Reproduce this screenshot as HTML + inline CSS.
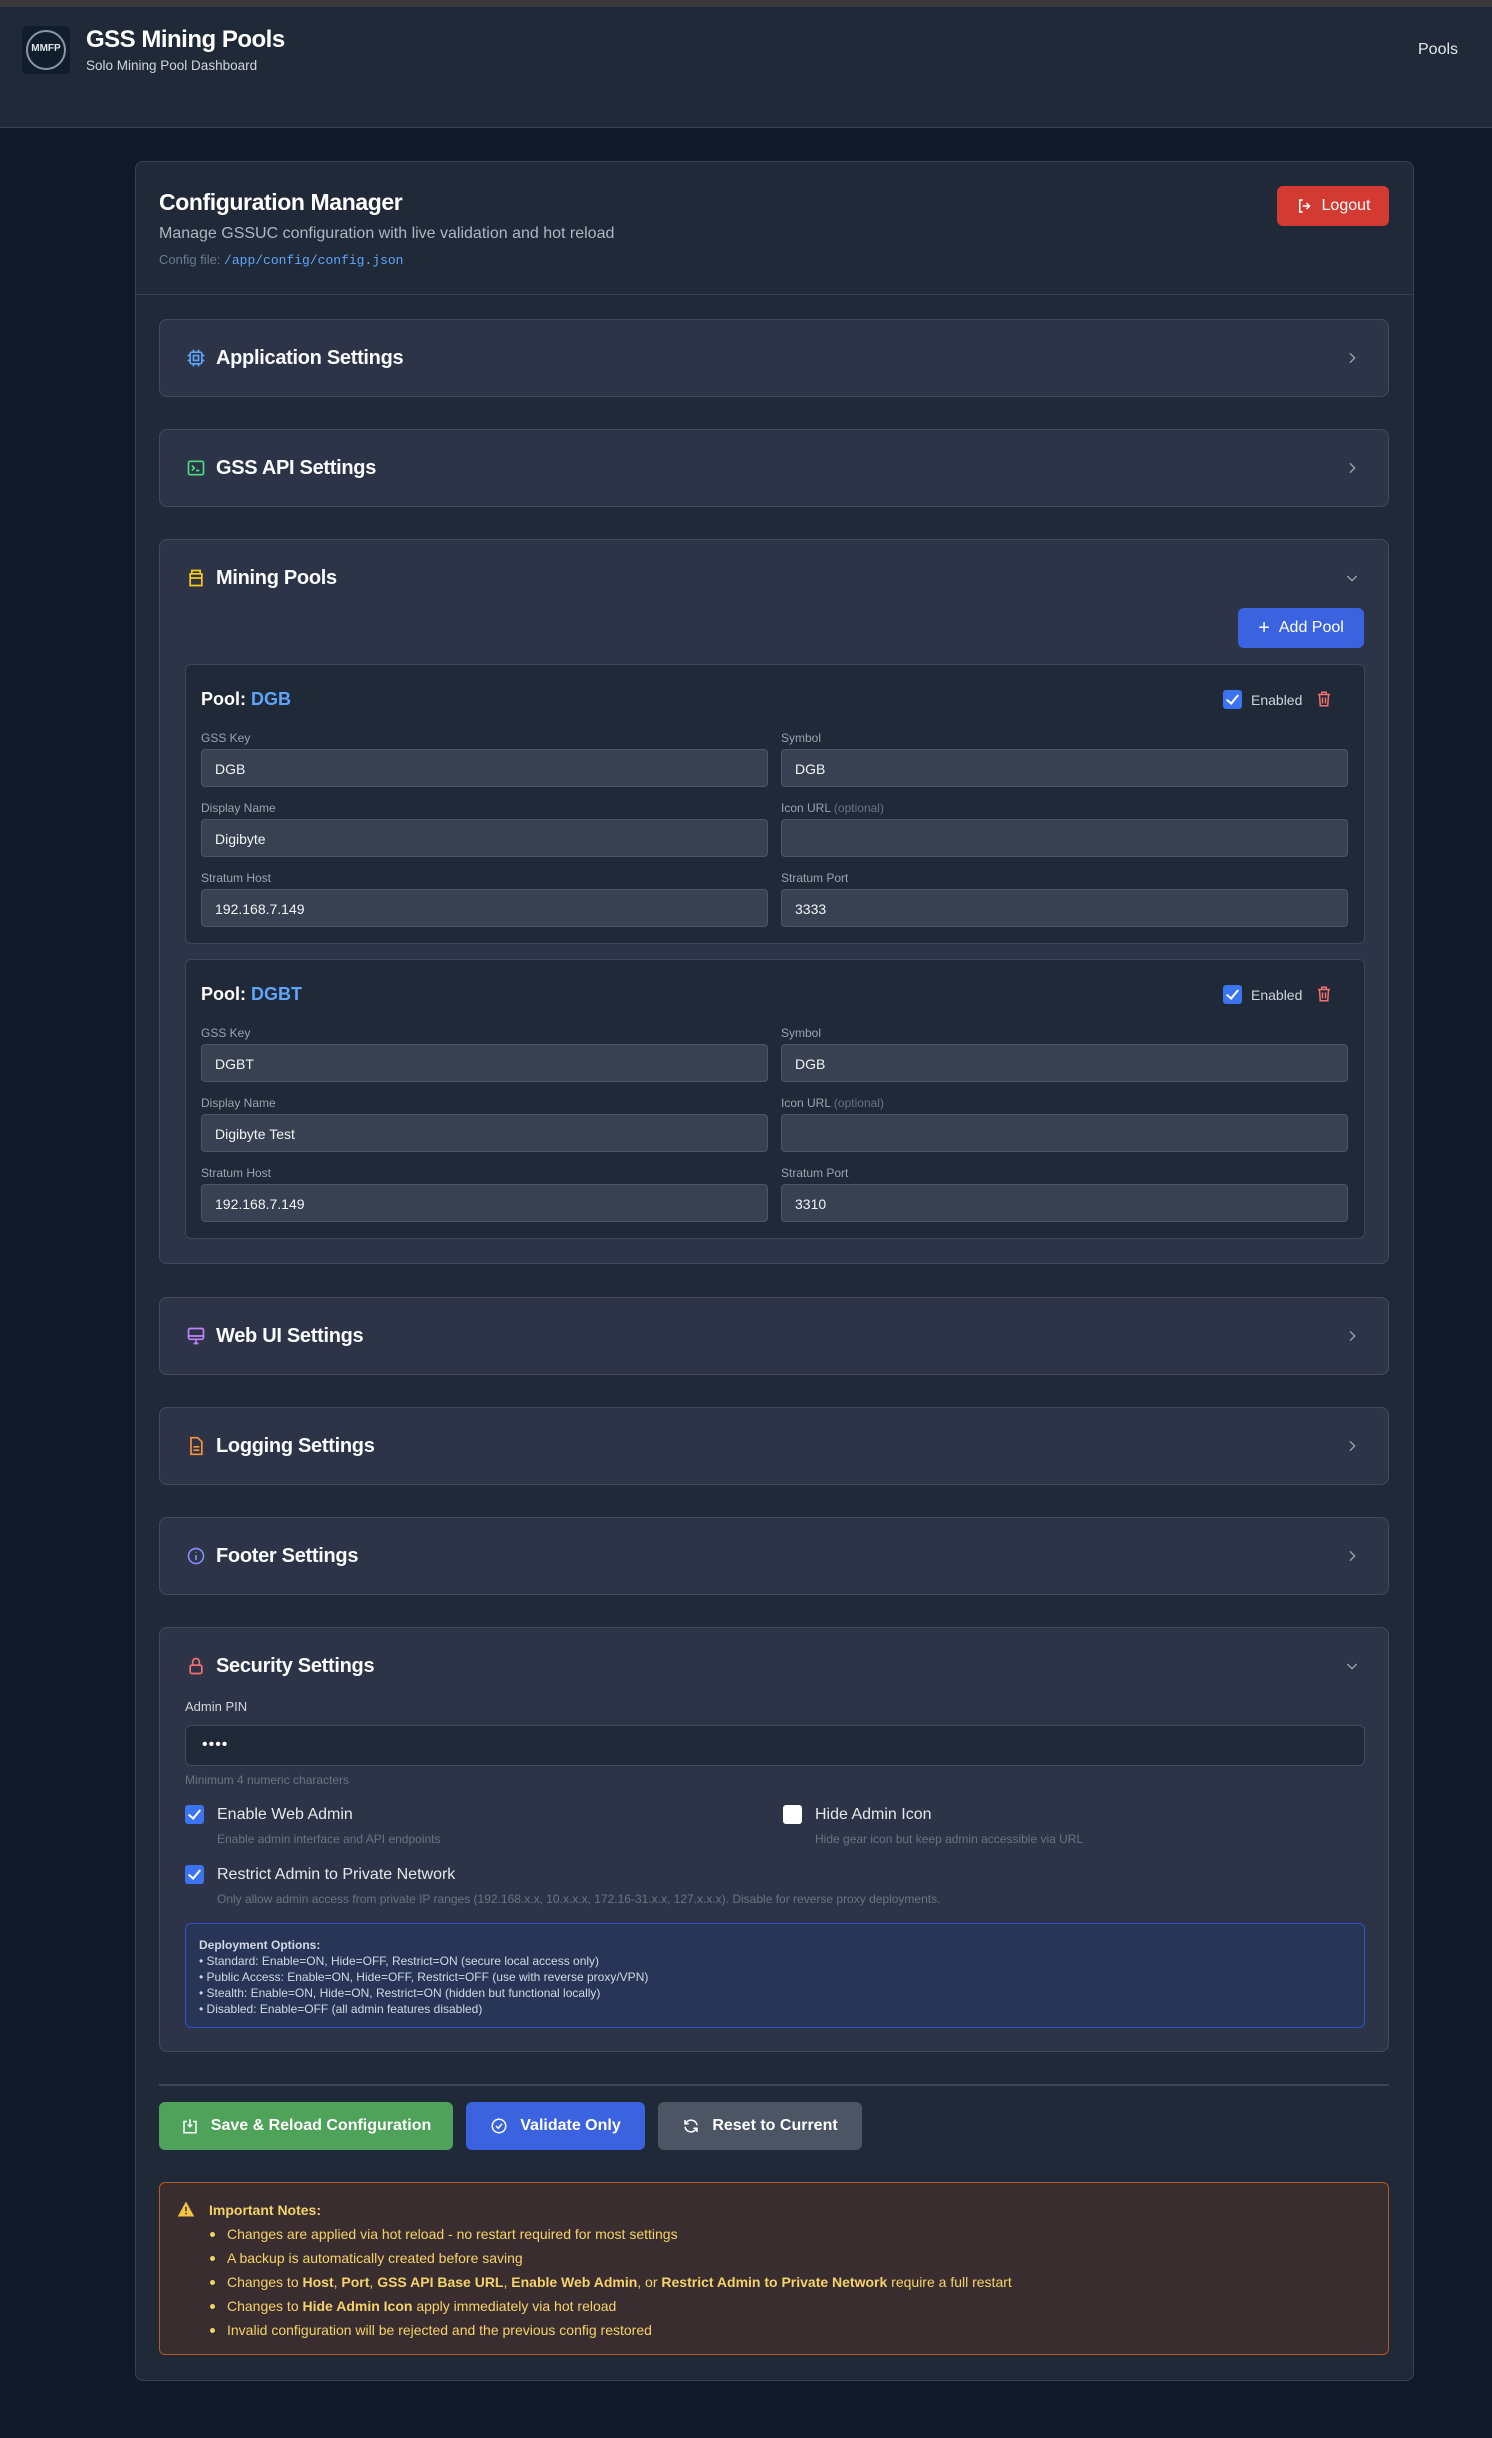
<!DOCTYPE html>
<html><head><meta charset="utf-8"><style>
*{box-sizing:border-box;margin:0;padding:0}
body{width:1492px;height:2438px;background:#111827;font-family:"Liberation Sans",sans-serif;color:#fff;position:relative;overflow:hidden}
.a{position:absolute}
.sec{position:absolute;left:159px;width:1230px;background:#2d3447;border:1px solid #414b5d;border-radius:8px}
.sec .t{position:absolute;left:56px;top:27px;font-size:20px;font-weight:bold;color:#f9fafb;letter-spacing:-0.3px}
.sec svg.ic{position:absolute;left:26px;top:28px}
.sec .ch{position:absolute;right:28px;top:30px}
.pool{position:absolute;left:25px;width:1180px;height:280px;background:#1f2937;border:1px solid #3c4657;border-radius:6px}
.lab{position:absolute;font-size:12px;color:#9ca3af}
.inp{position:absolute;height:38px;width:567px;background:#374151;border:1px solid #4b5563;border-radius:4px;font-size:14px;color:#f3f4f6;padding:11px 13px}
.cb{position:absolute;width:19px;height:19px;background:#3b73f0;border-radius:3px}
.cb:after{content:"";position:absolute;left:6px;top:2px;width:5px;height:10px;border:solid #fff;border-width:0 2.5px 2.5px 0;transform:rotate(40deg)}
.btn{position:absolute;top:2102px;height:48px;border-radius:6px;font-size:16px;font-weight:bold;color:#fff;display:flex;align-items:center;justify-content:center;gap:12px}
.note li{list-style:none;position:absolute;left:67px;font-size:14px;color:#f4d36a}
.note li:before{content:"";position:absolute;left:-17px;top:6px;width:5px;height:5px;border-radius:50%;background:#f4d36a}
</style></head><body>
<div class="a" style="left:0;top:0;width:1492px;height:7px;background:#3a3a3a"></div>
<div class="a" style="left:0;top:7px;width:1492px;height:121px;background:#1f2937;border-bottom:1px solid #374151"></div>
<div class="a" style="left:22px;top:26px;width:48px;height:48px;background:#0f1e2a;border-radius:5px;overflow:hidden"><div style="position:absolute;left:4px;top:4px;width:40px;height:40px;border:2px solid #8a96a3;border-radius:50%"></div><div style="position:absolute;left:0;top:17px;width:48px;text-align:center;font-size:10px;font-weight:bold;color:#dfe6ee">MMFP</div></div>
<div class="a" style="left:86px;top:26px;font-size:24px;font-weight:bold;letter-spacing:-0.5px">GSS Mining Pools</div>
<div class="a" style="left:86px;top:58px;font-size:13.5px;color:#d1d5db">Solo Mining Pool Dashboard</div>
<div class="a" style="left:1418px;top:41px;font-size:16px;color:#e5e7eb">Pools</div>

<div class="a" style="left:135px;top:161px;width:1279px;height:2220px;background:#1f2937;border:1px solid #374151;border-radius:8px"></div>
<div class="a" style="left:159px;top:189px;font-size:23px;font-weight:bold;letter-spacing:-0.4px">Configuration Manager</div>
<div class="a" style="left:159px;top:225px;font-size:16px;color:#aeb6c2">Manage GSSUC configuration with live validation and hot reload</div>
<div class="a" style="left:159px;top:252px;font-size:13px;color:#6b7a90">Config file: <span style="font-family:'Liberation Mono',monospace;color:#60a5fa">/app/config/config.json</span></div>
<div class="a" style="left:1277px;top:186px;width:112px;height:40px;background:#d33a32;border-radius:6px;font-size:16px;display:flex;align-items:center;justify-content:center;gap:8px"><svg width="18" height="18" viewBox="0 0 24 24" fill="none" stroke="#fff" stroke-width="2"><path d="M9 4H5v16h4M14 8l4 4-4 4M18 12H9"/></svg>Logout</div>
<div class="a" style="left:136px;top:294px;width:1277px;height:1px;background:#374151"></div>

<div class="sec" style="top:319px;height:78px"><svg class="ic" width="20" height="20" viewBox="0 0 24 24" fill="none" stroke="#60a5fa" stroke-width="2"><rect x="5" y="5" width="14" height="14" rx="2"/><rect x="9" y="9" width="6" height="6"/><path d="M9 2v3M15 2v3M9 19v3M15 19v3M2 9h3M2 15h3M19 9h3M19 15h3"/></svg><div class="t">Application Settings</div><svg class="ch" width="16" height="16" viewBox="0 0 24 24" fill="none" stroke="#9ca3af" stroke-width="2"><path d="M9 5l7 7-7 7"/></svg></div>
<div class="sec" style="top:429px;height:78px"><svg class="ic" width="20" height="20" viewBox="0 0 24 24" fill="none" stroke="#4ade80" stroke-width="2"><rect x="3" y="4" width="18" height="16" rx="2"/><path d="M7 9l3 3-3 3M12 15h4"/></svg><div class="t">GSS API Settings</div><svg class="ch" width="16" height="16" viewBox="0 0 24 24" fill="none" stroke="#9ca3af" stroke-width="2"><path d="M9 5l7 7-7 7"/></svg></div>

<div class="sec" style="top:539px;height:725px"><svg class="ic" width="20" height="20" viewBox="0 0 24 24" fill="none" stroke="#facc15" stroke-width="2"><path d="M7 3h10v4H7zM5 7h14v14H5zM5 12h14"/></svg><div class="t">Mining Pools</div><svg class="ch" width="16" height="16" viewBox="0 0 24 24" fill="none" stroke="#9ca3af" stroke-width="2"><path d="M5 9l7 7 7-7"/></svg>
<div class="a" style="left:1078px;top:68px;width:126px;height:40px;background:#3b63e0;border-radius:6px;font-size:16px;display:flex;align-items:center;justify-content:center;gap:9px"><span style="font-size:20px;font-weight:normal">+</span>Add Pool</div>
<div class="pool" style="top:124px">
<div class="a" style="left:15px;top:24px;font-size:18px;font-weight:bold">Pool: <span style="color:#60a5fa">DGB</span></div>
<div class="cb" style="left:1037px;top:25px"></div><div class="a" style="left:1065px;top:27px;font-size:14px;color:#d1d5db">Enabled</div>
<svg class="a" style="left:1129px;top:25px" width="18" height="18" viewBox="0 0 24 24" fill="none" stroke="#f87171" stroke-width="2"><path d="M4 6h16M9 6V3h6v3M6 6l1 15h10l1-15M10 10v8M14 10v8"/></svg>
<div class="lab" style="left:15px;top:66px">GSS Key</div><div class="inp" style="left:15px;top:84px">DGB</div>
<div class="lab" style="left:595px;top:66px">Symbol</div><div class="inp" style="left:595px;top:84px">DGB</div>
<div class="lab" style="left:15px;top:136px">Display Name</div><div class="inp" style="left:15px;top:154px">Digibyte</div>
<div class="lab" style="left:595px;top:136px">Icon URL <span style="color:#6b7280">(optional)</span></div><div class="inp" style="left:595px;top:154px"></div>
<div class="lab" style="left:15px;top:206px">Stratum Host</div><div class="inp" style="left:15px;top:224px">192.168.7.149</div>
<div class="lab" style="left:595px;top:206px">Stratum Port</div><div class="inp" style="left:595px;top:224px">3333</div>
</div>
<div class="pool" style="top:419px">
<div class="a" style="left:15px;top:24px;font-size:18px;font-weight:bold">Pool: <span style="color:#60a5fa">DGBT</span></div>
<div class="cb" style="left:1037px;top:25px"></div><div class="a" style="left:1065px;top:27px;font-size:14px;color:#d1d5db">Enabled</div>
<svg class="a" style="left:1129px;top:25px" width="18" height="18" viewBox="0 0 24 24" fill="none" stroke="#f87171" stroke-width="2"><path d="M4 6h16M9 6V3h6v3M6 6l1 15h10l1-15M10 10v8M14 10v8"/></svg>
<div class="lab" style="left:15px;top:66px">GSS Key</div><div class="inp" style="left:15px;top:84px">DGBT</div>
<div class="lab" style="left:595px;top:66px">Symbol</div><div class="inp" style="left:595px;top:84px">DGB</div>
<div class="lab" style="left:15px;top:136px">Display Name</div><div class="inp" style="left:15px;top:154px">Digibyte Test</div>
<div class="lab" style="left:595px;top:136px">Icon URL <span style="color:#6b7280">(optional)</span></div><div class="inp" style="left:595px;top:154px"></div>
<div class="lab" style="left:15px;top:206px">Stratum Host</div><div class="inp" style="left:15px;top:224px">192.168.7.149</div>
<div class="lab" style="left:595px;top:206px">Stratum Port</div><div class="inp" style="left:595px;top:224px">3310</div>
</div>
</div>

<div class="sec" style="top:1297px;height:78px"><svg class="ic" width="20" height="20" viewBox="0 0 24 24" fill="none" stroke="#c084fc" stroke-width="2"><rect x="3" y="3" width="18" height="13" rx="2"/><path d="M3 12h18M9 21h6M12 16v5"/></svg><div class="t">Web UI Settings</div><svg class="ch" width="16" height="16" viewBox="0 0 24 24" fill="none" stroke="#9ca3af" stroke-width="2"><path d="M9 5l7 7-7 7"/></svg></div>
<div class="sec" style="top:1407px;height:78px"><svg class="ic" width="20" height="20" viewBox="0 0 24 24" fill="none" stroke="#fb923c" stroke-width="2"><path d="M6 2h8l5 5v15H6zM9 13h7M9 17h7"/></svg><div class="t">Logging Settings</div><svg class="ch" width="16" height="16" viewBox="0 0 24 24" fill="none" stroke="#9ca3af" stroke-width="2"><path d="M9 5l7 7-7 7"/></svg></div>
<div class="sec" style="top:1517px;height:78px"><svg class="ic" width="20" height="20" viewBox="0 0 24 24" fill="none" stroke="#818cf8" stroke-width="2"><circle cx="12" cy="12" r="9"/><path d="M12 11v6M12 7v1"/></svg><div class="t">Footer Settings</div><svg class="ch" width="16" height="16" viewBox="0 0 24 24" fill="none" stroke="#9ca3af" stroke-width="2"><path d="M9 5l7 7-7 7"/></svg></div>

<div class="sec" style="top:1627px;height:425px"><svg class="ic" width="20" height="20" viewBox="0 0 24 24" fill="none" stroke="#f87171" stroke-width="2"><rect x="5" y="11" width="14" height="10" rx="2"/><path d="M8 11V7a4 4 0 018 0v4"/></svg><div class="t">Security Settings</div><svg class="ch" width="16" height="16" viewBox="0 0 24 24" fill="none" stroke="#9ca3af" stroke-width="2"><path d="M5 9l7 7 7-7"/></svg>
<div class="a" style="left:25px;top:71px;font-size:13px;color:#d1d5db">Admin PIN</div>
<div class="a" style="left:25px;top:97px;width:1180px;height:41px;background:#1f2937;border:1px solid #414b5d;border-radius:6px;font-size:16px;padding:10px 16px;letter-spacing:1px">••••</div>
<div class="a" style="left:25px;top:145px;font-size:12px;color:#6b7280">Minimum 4 numeric characters</div>
<div class="cb" style="left:25px;top:177px"></div><div class="a" style="left:57px;top:178px;font-size:16px;color:#e5e7eb">Enable Web Admin</div>
<div class="a" style="left:57px;top:204px;font-size:12px;color:#6b7280">Enable admin interface and API endpoints</div>
<div class="a" style="left:623px;top:177px;width:19px;height:19px;background:#fff;border-radius:3px"></div><div class="a" style="left:655px;top:178px;font-size:16px;color:#e5e7eb">Hide Admin Icon</div>
<div class="a" style="left:655px;top:204px;font-size:12px;color:#6b7280">Hide gear icon but keep admin accessible via URL</div>
<div class="cb" style="left:25px;top:237px"></div><div class="a" style="left:57px;top:238px;font-size:16px;color:#e5e7eb">Restrict Admin to Private Network</div>
<div class="a" style="left:57px;top:264px;font-size:12px;color:#6b7280">Only allow admin access from private IP ranges (192.168.x.x, 10.x.x.x, 172.16-31.x.x, 127.x.x.x). Disable for reverse proxy deployments.</div>
<div class="a" style="left:25px;top:295px;width:1180px;height:105px;background:#283556;border:1px solid #3050c8;border-radius:6px;padding:13px 13px;font-size:12px;color:#d1d9e6;line-height:16px">
<b>Deployment Options:</b><br>• Standard: Enable=ON, Hide=OFF, Restrict=ON (secure local access only)<br>• Public Access: Enable=ON, Hide=OFF, Restrict=OFF (use with reverse proxy/VPN)<br>• Stealth: Enable=ON, Hide=ON, Restrict=ON (hidden but functional locally)<br>• Disabled: Enable=OFF (all admin features disabled)</div>
</div>

<div class="a" style="left:159px;top:2084px;width:1230px;height:2px;background:#3c4657"></div>
<div class="btn" style="left:159px;width:294px;background:#4ea25a"><svg width="18" height="18" viewBox="0 0 24 24" fill="none" stroke="#fff" stroke-width="2"><path d="M8 6H4v15h16V6h-4M12 3v10M9 10l3 3 3-3"/></svg>Save &amp; Reload Configuration</div>
<div class="btn" style="left:466px;width:179px;background:#3b63e0"><svg width="18" height="18" viewBox="0 0 24 24" fill="none" stroke="#fff" stroke-width="2"><circle cx="12" cy="12" r="9"/><path d="M8 12l3 3 5-6"/></svg>Validate Only</div>
<div class="btn" style="left:658px;width:204px;background:#4b5563"><svg width="18" height="18" viewBox="0 0 24 24" fill="none" stroke="#fff" stroke-width="2"><path d="M20 11a8 8 0 00-14-4L4 9M4 4v5h5M4 13a8 8 0 0014 4l2-2M20 20v-5h-5"/></svg>Reset to Current</div>

<div class="a note" style="left:159px;top:2182px;width:1230px;height:173px;background:#3a2d2f;border:1px solid #b35a22;border-radius:6px">
<svg class="a" style="left:17px;top:17px" width="18" height="18" viewBox="0 0 24 24"><path d="M12 2L23 22H1z" fill="#f4c542"/><path d="M12 9v6M12 17v2" stroke="#3a2d2f" stroke-width="2"/></svg>
<div class="a" style="left:49px;top:19px;font-size:14px;font-weight:bold;color:#f4d36a">Important Notes:</div>
<li style="top:43px">Changes are applied via hot reload - no restart required for most settings</li>
<li style="top:67px">A backup is automatically created before saving</li>
<li style="top:91px">Changes to <b>Host</b>, <b>Port</b>, <b>GSS API Base URL</b>, <b>Enable Web Admin</b>, or <b>Restrict Admin to Private Network</b> require a full restart</li>
<li style="top:115px">Changes to <b>Hide Admin Icon</b> apply immediately via hot reload</li>
<li style="top:139px">Invalid configuration will be rejected and the previous config restored</li>
</div>
</body></html>
